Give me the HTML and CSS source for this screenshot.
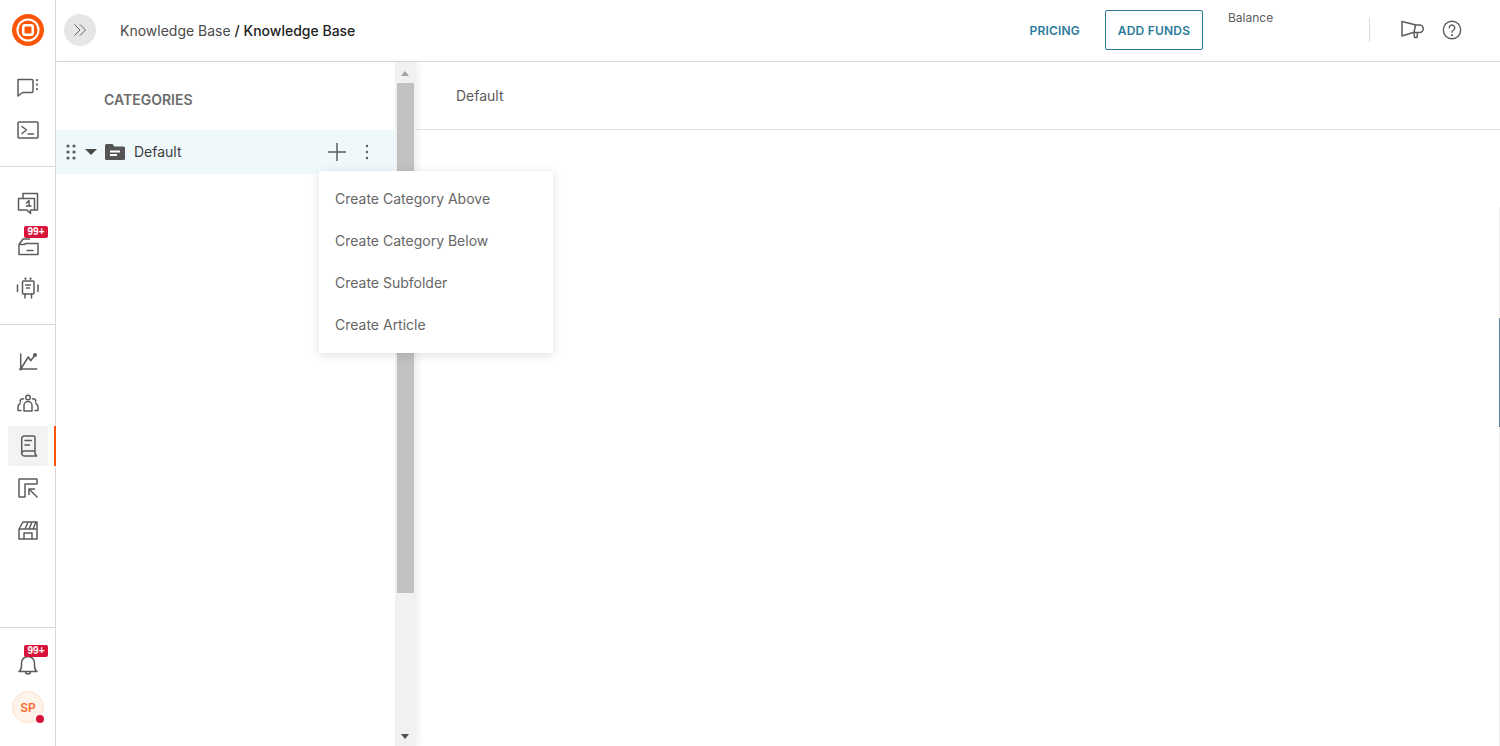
FILE: index.html
```html
<!DOCTYPE html>
<html lang="en">
<head>
<meta charset="utf-8">
<title>Knowledge Base</title>
<link rel="stylesheet" href="styles.css">
</head>
<body>
<div class="app">
  <nav class="rail">
    <div class="logo-box">
      <svg class="logo" viewBox="0 0 32 32"><circle cx="16" cy="16" r="16" fill="#fb5607"/><circle cx="16" cy="16" r="11.5" fill="#fff"/><circle cx="16" cy="16" r="9.5" fill="#fb5607"/><rect x="10" y="10" width="12" height="12" rx="3" fill="#fff"/><rect x="12.5" y="12.5" width="7" height="7" rx="1" fill="#fb5607"/></svg>
    </div>
    <div class="rail-group first">
      <a class="rail-item"><svg class="ico" viewBox="0 0 24 24"><path d="M2.500 4.500h13.500a1 1 0 0 1 1 1v11a1 1 0 0 1-1 1H6.500L2 21V5a.5.5 0 0 1 .5-.5z"/><path class="dots" d="M21 5v.1M21 9.500v.1M21 14v.1"/></svg></a>
      <a class="rail-item"><svg class="ico" viewBox="0 0 24 24"><rect x="2" y="5" width="20" height="16" rx="1"/><path d="M6 9.500l4.500 3.500L6 16.500M12 17h5.500"/></svg></a>
    </div>
    <div class="rail-group second">
      <a class="rail-item"><svg class="ico" viewBox="0 0 24 24"><path d="M7 7.500V2.500h14.500v16.500h-3M7 7.500H2.500V19h8.500l3.500 3.500V19h4V7.500H7"/><path d="M10.500 12l2.500-2.500V15M10.500 15h4.500"/></svg></a>
      <a class="rail-item"><svg class="ico" viewBox="0 0 24 24"><path d="M3 11.500L7 6h6.500M3 11.500V21.500h19v-11H10l-2 1z"/><path d="M11 17.500h6"/></svg><span class="badge">99+</span></a>
      <a class="rail-item"><svg class="ico" viewBox="0 0 24 24"><rect x="6.500" y="6" width="11.500" height="13" rx="1"/><path d="M9.500 10h5M10.500 13h3M9 19v4M15.500 19v4M1.500 10v6.500M22 10v6.500"/><path class="dots" d="M9.500 3.700v.1M14.500 3.700v.1"/></svg></a>
    </div>
    <div class="rail-group third">
      <a class="rail-item"><svg class="ico" viewBox="0 0 24 24"><path d="M4.700 4v15h16M4.700 19l7.600-12 2.400 3.700L19 5"/><circle class="fill" cx="19" cy="5" r="2"/><circle class="fill" cx="4.700" cy="19" r="1.500"/></svg></a>
      <a class="rail-item"><svg class="ico" viewBox="0 0 24 24"><circle cx="12" cy="5.500" r="2.300"/><path d="M8 19v-5.500a4 4 0 0 1 8 0V19z"/><path d="M4.500 10a2.200 2.200 0 0 1 3-3M2 18.500V15a4 4 0 0 1 2-3.500M2 18.500h3M19.500 10a2.200 2.200 0 0 0-3-3M22 18.500V15a4 4 0 0 0-2-3.500M22 18.500h-3"/></svg></a>
      <a class="rail-item active"><svg class="ico" viewBox="0 0 24 24"><path d="M19 17v2.500l1.500 2.500H8.500a2.800 2.800 0 0 1-2.800-2.800V4.500A2.500 2.500 0 0 1 8.200 2h9.300A1.500 1.500 0 0 1 19 3.500V17H8.500a2.500 2.500 0 0 0-2.800 2.200"/><path d="M9 6.500h6.500M9 11h4.500"/></svg></a>
      <a class="rail-item"><svg class="ico" viewBox="0 0 24 24"><path d="M3 21V3h18v5H9v13zM21 21l-8-8M13 13v5.500M13 13h5.500"/></svg></a>
      <a class="rail-item"><svg class="ico" viewBox="0 0 24 24"><path d="M7 4h14v17H3V11M3 11l4-7M3 11h18M9 11l3-7M13 11l3-7M17 11l3-7M8 21v-6h8v6"/></svg></a>
    </div>
    <div class="rail-bottom">
      <a class="rail-item"><svg class="ico" viewBox="0 0 24 24"><path d="M3 18.500c2-1.500 2.500-3 2.500-6V10a6.500 6.500 0 0 1 13 0v2.500c0 3 .5 4.500 2.500 6zM9.500 18.500a2.500 2.500 0 0 0 5 0"/></svg><span class="badge">99+</span></a>
      <div class="avatar">SP<span class="dot"></span></div>
    </div>
  </nav>

  <div class="main">
    <header class="topbar">
      <button class="toggle"><svg viewBox="0 0 16 16"><path d="M2.500 2.500L8 8l-5.500 5.500M8 2.500L13.500 8 8 13.500"/></svg></button>
      <div class="crumbs">Knowledge Base <b>/ Knowledge Base</b></div>
      <div class="top-actions">
        <a class="pricing">PRICING</a>
        <a class="funds">ADD FUNDS</a>
        <div class="balance">Balance</div>
        <span class="vline"></span>
        <svg class="ico top-ico mega" viewBox="0 0 24 24"><path d="M2 3.500l14 3.500h3.500a3 3 0 0 1 0 7.500H17M2 3.500V18l11-3.500h4M15.500 7l-1.500 7.500.5 5h2.500l.5-5"/></svg>
        <svg class="ico top-ico help" viewBox="0 0 24 24"><circle cx="12" cy="12" r="9.500"/><path d="M9 9.500a3 3 0 1 1 4.700 2.500c-1.100.8-1.700 1.300-1.700 2.500"/><path class="dots" d="M12 17.500v.1"/></svg>
      </div>
    </header>

    <div class="content">
      <aside class="sidebar">
        <div class="cat-panel">
          <h2 class="cat-title">CATEGORIES</h2>
          <div class="cat-row">
            <svg class="grip" viewBox="0 0 10 16"><circle cx="2" cy="2" r="1.600"/><circle cx="8" cy="2" r="1.600"/><circle cx="2" cy="8" r="1.600"/><circle cx="8" cy="8" r="1.600"/><circle cx="2" cy="14" r="1.600"/><circle cx="8" cy="14" r="1.600"/></svg>
            <span class="caret"></span>
            <svg class="folder" viewBox="0 0 20 16"><path d="M1.500 0h6l2 2.500h9A1.500 1.500 0 0 1 20 4v10.500a1.500 1.500 0 0 1-1.500 1.500h-17A1.500 1.500 0 0 1 0 14.500v-13A1.500 1.500 0 0 1 1.500 0z"/><rect class="cut" x="5" y="6.500" width="10" height="2"/><rect class="cut" x="5" y="10" width="7" height="2"/></svg>
            <span class="cat-name">Default</span>
            <svg class="plus" viewBox="0 0 18 18"><path d="M9 0v18M0 9h18"/></svg>
            <svg class="kebab" viewBox="0 0 4 16"><circle cx="2" cy="2" r="1.200"/><circle cx="2" cy="8" r="1.200"/><circle cx="2" cy="14" r="1.200"/></svg>
          </div>
        </div>
        <div class="scroll">
          <span class="arrow up"></span>
          <div class="thumb"></div>
          <span class="arrow down"></span>
        </div>
        <ul class="menu">
          <li>Create Category Above</li>
          <li>Create Category Below</li>
          <li>Create Subfolder</li>
          <li>Create Article</li>
        </ul>
      </aside>
      <section class="detail">
        <div class="tab-row">Default</div>
      </section>
      <div class="edge"></div>
    </div>
  </div>
</div>
</body>
</html>
```

FILE: styles.css
```css
* { box-sizing: border-box; }
html, body { margin: 0; height: 100%; overflow: hidden; background: #fff; }
body { font-family: Inter, "Liberation Sans", sans-serif; color: #5c5c5c; }
ul { list-style: none; margin: 0; padding: 0; }

.app { display: flex; width: 1500px; height: 746px; }

/* left rail */
.rail { width: 56px; flex: none; display: flex; flex-direction: column; border-right: 1px solid #d9d9d9; }
.logo-box { height: 62px; padding: 14px 0 0 12px; }
.logo { width: 32px; height: 32px; display: block; }
.rail-group { display: flex; flex-direction: column; align-items: stretch; border-bottom: 1px solid #d9d9d9; }
.rail-group.first { padding: 4px 0 16px; height: 105px; }
.rail-group.second { padding: 15px 0; height: 158px; }
.rail-group.third { padding: 16px 0 0; border-bottom: 0; }
.rail-item { height: 42px; display: flex; align-items: center; justify-content: center; position: relative; padding-left: 1px; flex: none; }
.rail-item.active::before { content: ""; position: absolute; left: 8px; top: 1px; width: 40px; height: 40px; background: #f3f3f3; border-radius: 2px; }
.rail-item.active::after { content: ""; position: absolute; right: -1px; top: 1px; width: 2px; height: 40px; background: #fb5607; }
.ico { width: 24px; height: 24px; fill: none; stroke: #5c5c5c; stroke-width: 1.5; stroke-linejoin: round; stroke-linecap: round; position: relative; z-index: 1; }
.ico .dots { stroke-width: 2.2; }
.ico .fill { fill: #5c5c5c; stroke: none; }
.badge { position: absolute; left: 24px; top: 2px; z-index: 2; background: #d8143a; color: #fff; font: 700 10px/12px "Liberation Sans", sans-serif; padding: 0 2px; border-radius: 2px; width: 24px; text-align: center; }
.rail-bottom { margin-top: auto; border-top: 1px solid #d9d9d9; padding-top: 16px; height: 119px; display: flex; flex-direction: column; }
.rail-bottom .badge { top: 1px; }
.avatar { width: 32px; height: 32px; border-radius: 50%; margin: 5px 0 0 12px; background: #fff3ea; border: 1px solid #fde0cc; color: #fb6a2c; font-size: 12px; font-weight: 600; display: flex; align-items: center; justify-content: center; position: relative; flex: none; }
.dot { position: absolute; right: -1px; bottom: -1px; width: 8px; height: 8px; border-radius: 50%; background: #d8143a; }

/* top bar */
.main { flex: 1; min-width: 0; display: flex; flex-direction: column; }
.topbar { height: 62px; flex: none; border-bottom: 1px solid #d9d9d9; display: flex; align-items: center; padding: 0 37px 1px 8px; }
.toggle { width: 32px; height: 32px; padding: 0; border: 0; border-radius: 50%; background: #e6e6e6; display: flex; align-items: center; justify-content: center; }
.toggle svg { width: 16px; height: 16px; fill: none; stroke: #666; stroke-width: 1; }
.crumbs { margin-left: 24px; font-size: 14px; line-height: 17px; color: #4a4a4a; }
.crumbs b { font-weight: 500; color: #222; }
.top-actions { margin-left: auto; display: flex; align-items: center; height: 100%; }
.pricing { font-size: 12px; font-weight: 600; color: #2b7a9b; letter-spacing: .2px; }
.funds { margin-left: 25px; width: 98px; height: 40px; border: 1px solid #2b7a9b; border-radius: 2px; color: #2b7a9b; font-size: 12px; font-weight: 600; letter-spacing: .2px; display: flex; align-items: center; justify-content: center; }
.balance { width: 166px; align-self: flex-start; margin-top: 11px; padding-left: 25px; font-size: 12px; line-height: 14px; color: #5c5c5c; }
.vline { width: 1px; height: 24px; background: #d9d9d9; }
.top-ico { margin-left: 30px; }
.mega { margin-right: -3px; }
.top-ico.help { width: 22px; height: 22px; margin-left: 20px; }

/* content */
.content { flex: 1; min-height: 0; display: flex; position: relative; }
.sidebar { width: 360px; flex: none; display: flex; position: relative; box-shadow: 3px 0 5px rgba(0,0,0,.05); z-index: 1; }
.cat-panel { flex: 1; min-width: 0; }
.cat-title { margin: 0; height: 68px; padding: 29px 0 0 48px; font-size: 14px; line-height: 17px; font-weight: 600; color: #6b6b6b; }
.cat-row { height: 44px; background: #eff8fb; display: flex; align-items: center; padding-left: 10px; }
.grip { width: 10px; height: 16px; fill: #5c5c5c; flex: none; }
.caret { width: 0; height: 0; margin-left: 9px; border-left: 6.5px solid transparent; border-right: 6.5px solid transparent; border-top: 6px solid #4a4a4a; flex: none; }
.folder { width: 20px; height: 16px; margin-left: 8px; fill: #555; flex: none; }
.folder .cut { fill: #fff; }
.cat-name { margin: 0 0 1px 9px; font-size: 14px; line-height: 17px; color: #3e3e3e; }
.plus { width: 18px; height: 18px; margin-left: auto; fill: none; stroke: #5c5c5c; stroke-width: 1.5; flex: none; }
.kebab { width: 4px; height: 16px; margin: 0 26px 0 19px; fill: #5c5c5c; flex: none; }

.scroll { width: 21px; flex: none; background: #f1f1f1; position: relative; }
.thumb { width: 17px; height: 510px; margin: 21px 0 0 2px; background: #c1c1c1; }
.arrow { position: absolute; left: 6px; width: 0; height: 0; border-left: 4.5px solid transparent; border-right: 4.5px solid transparent; }
.arrow.up { top: 9px; border-bottom: 5px solid #a3a3a3; }
.arrow.down { bottom: 7px; border-top: 5px solid #505050; }

.menu { position: absolute; left: 263px; top: 109px; width: 234px; height: 182px; padding: 6px 0 10px; background: #fff; box-shadow: 0 2px 10px rgba(0,0,0,.12); z-index: 3; }
.menu li { height: 42px; padding-left: 16px; display: flex; align-items: center; font-size: 14px; color: #666; }

.detail { flex: 1; min-width: 0; }
.tab-row { height: 68px; border-bottom: 1px solid #e4e4e4; padding: 25px 0 0 40px; font-size: 14px; line-height: 17px; color: #5c5c5c; }
.edge { position: absolute; right: 0; top: 145px; width: 1px; height: 540px; background: linear-gradient(#f1f1f1 0, #f1f1f1 111px, #5a7e92 111px, #5a7e92 220px, #f1f1f1 220px); }
```
